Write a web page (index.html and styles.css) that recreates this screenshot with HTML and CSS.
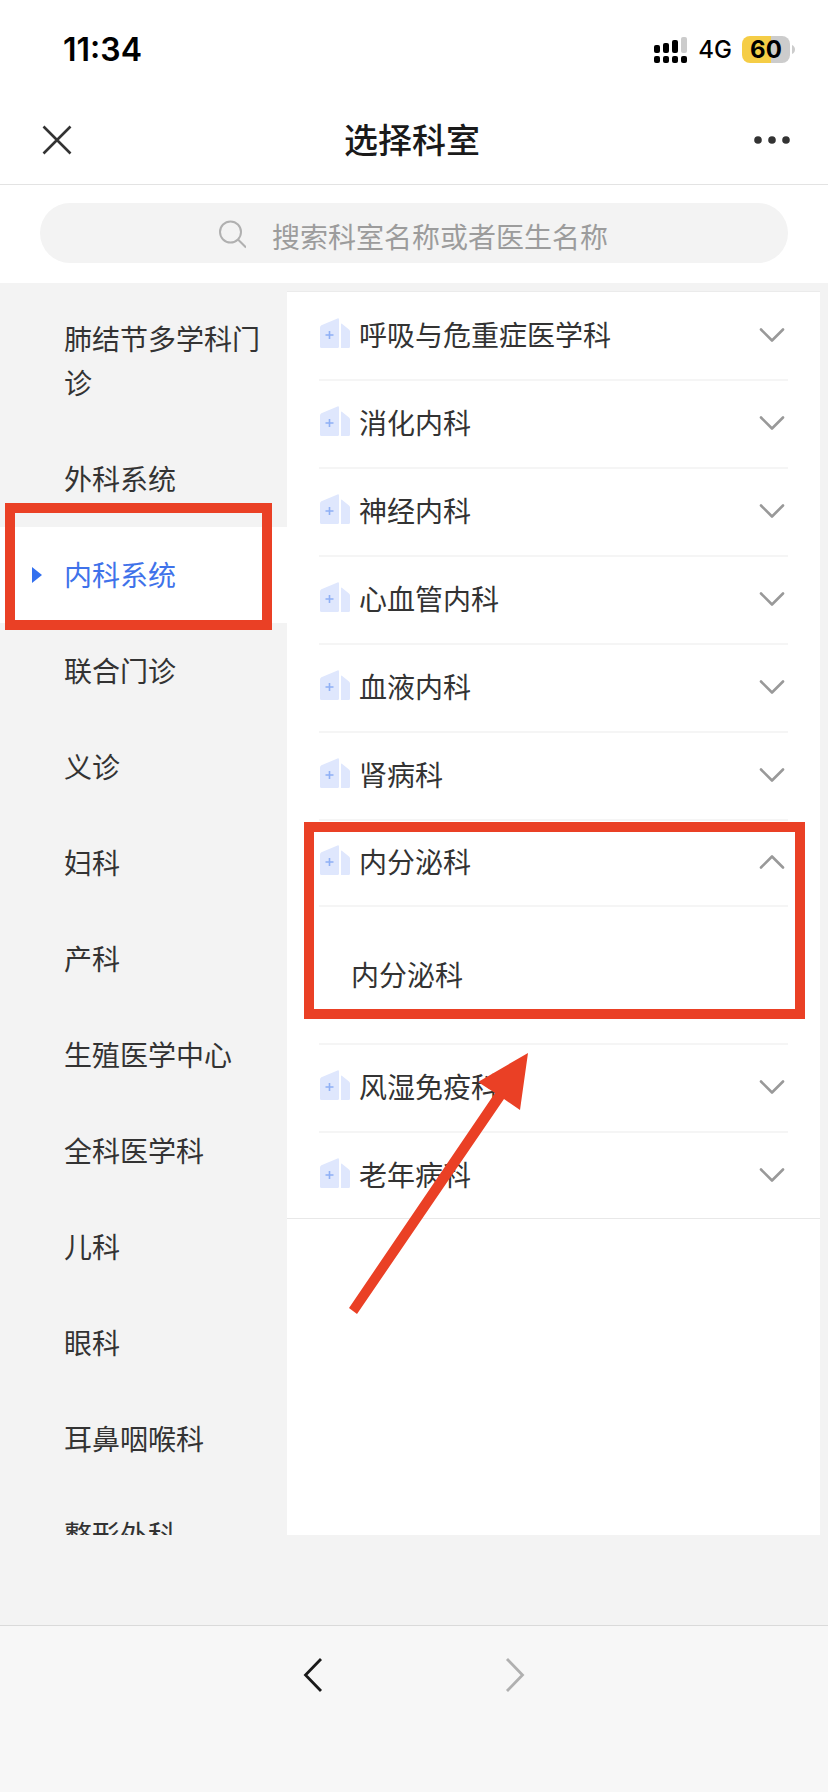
FILE: index.html
```html
<!DOCTYPE html>
<html lang="zh-CN">
<head>
<meta charset="utf-8">
<meta name="viewport" content="width=device-width, initial-scale=1">
<title>选择科室</title>
<link rel="stylesheet" href="styles.css">
</head>
<body>
<svg class="defs" width="0" height="0" aria-hidden="true">
  <symbol id="building" viewBox="0 0 30 30">
    <path fill="#dfe7fd" d="M0 9.5Q0 8 1.4 7.3L17.5.4Q19 0 19 1.5V28.5Q19 30 17.5 30H1.5Q0 30 0 28.5Z"/>
    <path fill="#dfe7fd" d="M21 6.5Q21 5 22.2 6L29 11.4Q30 12.3 30 13.5V28.5Q30 30 28.5 30H21Z"/>
    <path stroke="#8fb0f5" stroke-width="1.6" d="M5.5 17H13.5M9.5 13V21"/>
  </symbol>
  <symbol id="chevron" viewBox="0 0 26 16">
    <path fill="none" stroke="#999" stroke-width="2.6" stroke-linecap="round" stroke-linejoin="round" d="M2 2.5L13 13.5L24 2.5"/>
  </symbol>
</svg>
<div class="page">
  <div class="status">
    <span class="time">11:34</span>
    <div class="status-right">
      <svg class="signal" viewBox="0 0 34 27" aria-hidden="true">
        <rect x="0" y="9" width="6" height="8" rx="2"/><rect x="9" y="7" width="6" height="10" rx="2"/>
        <rect x="18" y="4" width="6" height="13" rx="2"/><rect x="27" y="1" width="6" height="16" rx="2" fill="#ccc"/>
        <rect x="0" y="20" width="6" height="7" rx="2"/><rect x="9" y="20" width="6" height="7" rx="2"/>
        <rect x="18" y="20" width="6" height="7" rx="2"/><rect x="27" y="20" width="6" height="7" rx="2"/>
      </svg>
      <span class="network">4G</span>
      <span class="battery">60</span>
      <svg class="nub" viewBox="0 0 3 9" aria-hidden="true"><path fill="#ccc" d="M0 0Q3 1.5 3 4.5T0 9Z"/></svg>
    </div>
  </div>
  <header class="header">
    <button class="icon-btn" aria-label="关闭"><svg width="30" height="30" viewBox="0 0 30 30"><path d="M1.5 1.5L28.5 28.5M28.5 1.5L1.5 28.5" stroke="#333" stroke-width="2.6"/></svg></button>
    <h1 class="title">选择科室</h1>
    <button class="icon-btn more" aria-label="更多"><svg width="36" height="10" viewBox="0 0 36 10" fill="#333"><circle cx="4" cy="5" r="3.8"/><circle cx="18" cy="5" r="3.8"/><circle cx="32" cy="5" r="3.8"/></svg></button>
  </header>
  <div class="search">
    <label class="search-box">
      <svg width="30" height="30" viewBox="0 0 30 30" fill="none" stroke="#b0b0b0" stroke-width="2"><circle cx="14.5" cy="13" r="10.5"/><path d="M22 20.5L30 28.5"/></svg>
      <input class="search-input" type="text" aria-label="搜索" placeholder="搜索科室名称或者医生名称">
    </label>
  </div>
  <main class="main">
    <nav class="side">
      <button class="side-item">肺结节多学科门诊</button>
      <button class="side-item">外科系统</button>
      <button class="side-item active">内科系统<span class="mark mark-side"></span></button>
      <button class="side-item">联合门诊</button>
      <button class="side-item">义诊</button>
      <button class="side-item">妇科</button>
      <button class="side-item">产科</button>
      <button class="side-item">生殖医学中心</button>
      <button class="side-item">全科医学科</button>
      <button class="side-item">儿科</button>
      <button class="side-item">眼科</button>
      <button class="side-item">耳鼻咽喉科</button>
      <button class="side-item">整形外科</button>
    </nav>
    <section class="card">
      <div class="list">
        <button class="row"><svg class="building"><use href="#building"/></svg><span class="name">呼吸与危重症医学科</span><svg class="chev"><use href="#chevron"/></svg></button>
        <button class="row"><svg class="building"><use href="#building"/></svg><span class="name">消化内科</span><svg class="chev"><use href="#chevron"/></svg></button>
        <button class="row"><svg class="building"><use href="#building"/></svg><span class="name">神经内科</span><svg class="chev"><use href="#chevron"/></svg></button>
        <button class="row"><svg class="building"><use href="#building"/></svg><span class="name">心血管内科</span><svg class="chev"><use href="#chevron"/></svg></button>
        <button class="row"><svg class="building"><use href="#building"/></svg><span class="name">血液内科</span><svg class="chev"><use href="#chevron"/></svg></button>
        <button class="row"><svg class="building"><use href="#building"/></svg><span class="name">肾病科</span><svg class="chev"><use href="#chevron"/></svg></button>
        <div class="group">
          <button class="row open" aria-expanded="true"><svg class="building"><use href="#building"/></svg><span class="name">内分泌科</span><svg class="chev"><use href="#chevron"/></svg></button>
          <button class="sub">内分泌科</button>
          <span class="mark mark-group"></span>
          <svg class="arrow" viewBox="0 0 180 262" aria-hidden="true"><path fill="#ea4025" d="M179 0L171 57L155 46L8 261L0 255L146 40L129 29Z"/></svg>
        </div>
        <button class="row"><svg class="building"><use href="#building"/></svg><span class="name">风湿免疫科</span><svg class="chev"><use href="#chevron"/></svg></button>
        <button class="row last"><svg class="building"><use href="#building"/></svg><span class="name">老年病科</span><svg class="chev"><use href="#chevron"/></svg></button>
      </div>
    </section>
  </main>
  <footer class="footer">
    <button class="nav-btn" aria-label="后退"><svg width="20" height="36" viewBox="0 0 20 36"><path d="M18 2L2.5 18L18 34" fill="none" stroke="#1a1a1a" stroke-width="2.8"/></svg></button>
    <button class="nav-btn" aria-label="前进" disabled><svg width="20" height="36" viewBox="0 0 20 36"><path d="M2 2L17.5 18L2 34" fill="none" stroke="#b0b0b0" stroke-width="2.8"/></svg></button>
  </footer>
</div>
</body>
</html>
```
FILE: styles.css
```css
* { box-sizing: border-box; }
body {
  margin: 0;
  background: #f3f3f3;
  color: #333;
  font-family: "Noto Sans CJK SC", sans-serif;
  font-size: 28px;
}
button {
  border: 0;
  padding: 0;
  background: none;
  color: inherit;
  font: inherit;
  text-align: left;
}
svg { display: block; flex: none; }
.defs { position: absolute; }
.page { display: flex; flex-direction: column; height: 100vh; }

.status {
  display: flex;
  align-items: center;
  justify-content: space-between;
  height: 96px;
  padding: 3px 33px 0 63px;
  background: #fff;
  color: #000;
  font-family: Inter, sans-serif;
}
.time { font-size: 32px; font-weight: 600; }
.status-right { display: flex; align-items: center; }
.signal { width: 34px; height: 27px; }
.network { margin: 0 10px; font-size: 24px; font-weight: 500; }
.battery {
  width: 48px;
  border-radius: 8px;
  background: linear-gradient(90deg, #f5cd46 60%, #ccc 60%);
  font-size: 24px;
  font-weight: 700;
  line-height: 27px;
  text-align: center;
}
.nub { width: 3px; height: 9px; margin-left: 2px; }

.header {
  display: flex;
  align-items: center;
  justify-content: space-between;
  height: 89px;
  padding: 0 38px 0 42px;
  border-bottom: 1px solid #e3e3e3;
  background: #fff;
}
.icon-btn { display: flex; align-items: center; width: 36px; height: 44px; }
.more { justify-content: flex-end; width: 44px; }
.title { margin: 0; padding-bottom: 2px; color: #1a1a1a; font-size: 34px; font-weight: 500; line-height: 48px; }

.search { padding: 18px 40px 20px; background: #fff; }
.search-box {
  display: flex;
  align-items: center;
  justify-content: center;
  gap: 26px;
  height: 60px;
  padding: 2px 0 0 2px;
  border-radius: 30px;
  background: #f3f3f3;
}
.search-input {
  width: 342px;
  padding: 4px 0 0;
  border: 0;
  outline: 0;
  background: none;
  color: #333;
  font: inherit;
}
.search-input::placeholder { color: #9c9c9c; opacity: 1; }

.main {
  display: flex;
  flex: 1;
  min-height: 0;
  padding: 8px 8px 0 0;
  margin-bottom: 90px;
}
.side {
  display: flex;
  flex: none;
  flex-direction: column;
  width: 287px;
  overflow: hidden;
}
.side-item {
  position: relative;
  flex: none;
  padding: 25px 16px 27px 64px;
  line-height: 44px;
}
.active { background: #fff; color: #3f72ea; }
.active::before {
  content: "";
  position: absolute;
  top: 40px;
  left: 32px;
  border: 8px solid transparent;
  border-left: 10px solid #3370ef;
  border-right: 0;
}
.mark { position: absolute; border: 10px solid #ea4025; pointer-events: none; }
.mark-side { inset: -24px 15px -7px 5px; z-index: 1; }
.mark-group { inset: 1px -17px 24px -15px; }

.card { flex: 1; border-top: 1px solid #ebebeb; background: #fff; }
.list { display: flex; flex-direction: column; padding: 1px 32px 0; border-bottom: 1px solid #e8e8e8; }
.row {
  display: flex;
  align-items: center;
  width: 100%;
  height: 88px;
  padding-bottom: 2px;
  border-bottom: 2px solid #f5f5f5;
}
.building { width: 30px; height: 30px; margin: 0 9px 4px 1px; }
.name { flex: 1; padding-bottom: 2px; line-height: 44px; }
.chev { width: 26px; height: 16px; margin-right: 3px; }
.open { height: 86px; }
.open .chev { transform: rotate(180deg); }
.last { height: 85px; border-bottom: 0; }
.group { position: relative; border-bottom: 2px solid #f5f5f5; }
.sub { display: block; width: 100%; padding: 45px 32px 47px; line-height: 44px; }
.arrow { position: absolute; top: 232px; left: 30px; z-index: 1; width: 180px; height: 262px; pointer-events: none; }

.footer {
  display: flex;
  justify-content: center;
  gap: 154px;
  height: 167px;
  padding-top: 25px;
  border-top: 1px solid #dadada;
  background: #f7f7f7;
}
.nav-btn { display: flex; align-items: center; justify-content: center; width: 48px; height: 48px; }
```
